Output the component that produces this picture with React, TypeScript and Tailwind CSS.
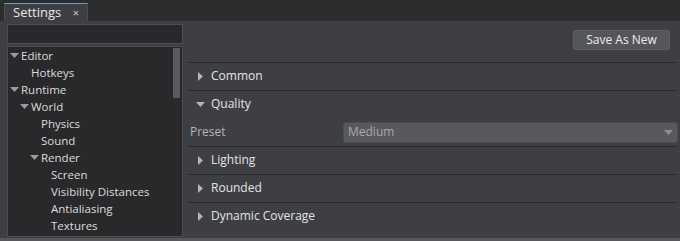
import React from "react";

const font = { fontFamily: '"Open Sans", "DejaVu Sans", sans-serif' };

function RightArrow() {
  return (
    <svg width="5" height="9" viewBox="0 0 5 9" className="shrink-0">
      <path d="M0 0 L5 4.5 L0 9 Z" fill="#b4b5b8" />
    </svg>
  );
}
function DownArrow({ color = "#b4b5b8" }: { color?: string }) {
  return (
    <svg width="9" height="5" viewBox="0 0 9 5" className="shrink-0">
      <path d="M0 0 L9 0 L4.5 5 Z" fill={color} />
    </svg>
  );
}

type Node = { label: string; level: number; open?: boolean };
const tree: Node[] = [
  { label: "Editor", level: 0, open: true },
  { label: "Hotkeys", level: 1 },
  { label: "Runtime", level: 0, open: true },
  { label: "World", level: 1, open: true },
  { label: "Physics", level: 2 },
  { label: "Sound", level: 2 },
  { label: "Render", level: 2, open: true },
  { label: "Screen", level: 3 },
  { label: "Visibility Distances", level: 3 },
  { label: "Antialiasing", level: 3 },
  { label: "Textures", level: 3 },
];
const padL: Record<number, string> = {
  0: "pl-[2px]",
  1: "pl-[12px]",
  2: "pl-[22px]",
  3: "pl-[32px]",
};

function Section({ label, open = false }: { label: string; open?: boolean }) {
  return (
    <div className="h-[28px] border-t border-[#2a2b2e] flex items-center pb-[1px]">
      <div className="w-[23px] flex items-center justify-center pl-[1px]">
        {open ? <DownArrow /> : <RightArrow />}
      </div>
      <span className="text-[12px] text-[#e4e4e4]">{label}</span>
    </div>
  );
}

export default function App() {
  return (
    <div className="w-[680px] h-[241px] bg-[#2b2c2e] flex flex-col overflow-hidden" style={font}>
      <div className="h-[21px] flex items-end pl-[4px] shrink-0">
        <div className="w-[84px] h-[18px] bg-[#3e3f43] border-t border-t-[#6f9cc4] border-x border-x-[#4c4d51] flex items-center pl-[8px] pr-[8px] justify-between">
          <span className="text-[13px] text-[#e8e8e8] leading-none">Settings</span>
          <span className="text-[11px] text-[#c8c8c8] leading-none">×</span>
        </div>
      </div>
      <div className="flex-1 bg-[#3e3f43] flex">
        <div className="w-[183px] pl-[7px] pt-[3px] flex flex-col gap-[2px]">
          <div className="h-[20px] bg-[#29292b] border border-[#4e4f53]" />
          <div className="flex-1 bg-[#29292b] border border-[#4a4b4f] flex mb-[1px]">
            <div className="flex-1 flex flex-col">
              {tree.map((n) => (
                <div key={n.label} className={`h-[17px] flex items-center ${padL[n.level]}`}>
                  <div className="w-[10px] flex items-center">
                    {n.open ? <DownArrow color="#9a9b9e" /> : null}
                  </div>
                  <span className="text-[11.5px] text-[#dcdcdc] leading-none ml-[1px]">{n.label}</span>
                </div>
              ))}
            </div>
            <div className="w-[9px] pt-[1px] pr-[2px]">
              <div className="h-[50px] bg-[#5a5b5f]" />
            </div>
          </div>
        </div>
        <div className="w-[495px] pl-[5px] flex flex-col">
          <div className="h-[41px] flex justify-end items-start pt-[9px] pr-[8px]">
            <button className="w-[97px] h-[20px] bg-[#55565a] border border-[#606165] rounded-[3px] text-[12px] text-[#ececec] leading-none">
              Save As New
            </button>
          </div>
          <Section label="Common" />
          <Section label="Quality" open />
          <div className="h-[28px] flex items-center">
            <span className="w-[155px] pl-[2px] text-[12px] text-[#b6b7ba]">Preset</span>
            <div className="flex-1 h-[21px] bg-[#58595d] border border-[#4c4d51] rounded-[3px] flex items-center pl-[4px] pr-[4px] justify-between">
              <span className="text-[12px] text-[#a9aaad]">Medium</span>
              <DownArrow color="#8e8f92" />
            </div>
          </div>
          <Section label="Lighting" />
          <Section label="Rounded" />
          <Section label="Dynamic Coverage" />
        </div>
      </div>
      <div className="h-[3px] bg-[#57585b] shrink-0" />
    </div>
  );
}
